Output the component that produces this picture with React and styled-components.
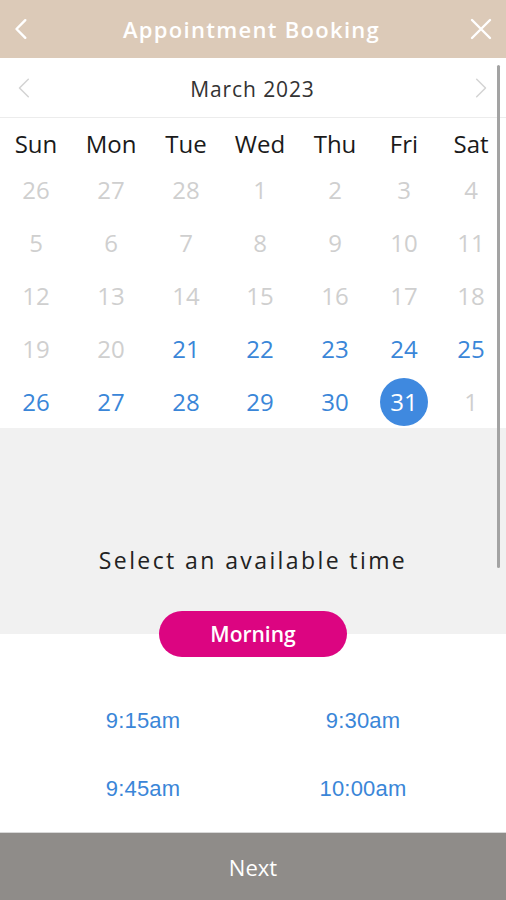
import React, { useState } from 'react'
import styled, { createGlobalStyle } from 'styled-components'

const GlobalStyle = createGlobalStyle`
  html, body {
    margin: 0;
    padding: 0;
    height: 100%;
  }
  body {
    font-family: 'Open Sans', sans-serif;
    background: #fff;
  }
  #root {
    height: 100%;
  }
`

const weekdays = ['Sun', 'Mon', 'Tue', 'Wed', 'Thu', 'Fri', 'Sat']

const weeks = [
  [26, 27, 28, 1, 2, 3, 4],
  [5, 6, 7, 8, 9, 10, 11],
  [12, 13, 14, 15, 16, 17, 18],
  [19, 20, 21, 22, 23, 24, 25],
  [26, 27, 28, 29, 30, 31, 1],
]

// first selectable cell is Tue 21 (week 3, col 2), last is Fri 31
const isAvailable = (w, d) => {
  if (w === 3) return d >= 2
  if (w === 4) return d <= 5
  return false
}

const slots = ['9:15am', '9:30am', '9:45am', '10:00am']

const Chevron = ({ dir = 'left', color, size = 20, width = 2 }) => (
  <svg width={size} height={size} viewBox='0 0 20 20' fill='none'>
    <path
      d={dir === 'left' ? 'M13 2 L5 10 L13 18' : 'M7 2 L15 10 L7 18'}
      stroke={color}
      strokeWidth={width}
      strokeLinecap='round'
      strokeLinejoin='round'
    />
  </svg>
)

const App = () => {
  const [selected, setSelected] = useState(31)

  return (
    <>
      <GlobalStyle />
      <Screen>
        <Header>
          <IconButton>
            <Chevron dir='left' color='#fff' size={22} width={2.2} />
          </IconButton>
          <Title>Appointment Booking</Title>
          <IconButton>
            <svg width='22' height='22' viewBox='0 0 22 22'>
              <path
                d='M2 2 L20 20 M20 2 L2 20'
                stroke='#fff'
                strokeWidth='2.4'
                strokeLinecap='round'
              />
            </svg>
          </IconButton>
        </Header>

        <Body>
          <Scrollbar />
          <MonthBar>
            <IconButton>
              <Chevron dir='left' color='#d4d4d4' size={22} width={1.4} />
            </IconButton>
            <MonthLabel>March 2023</MonthLabel>
            <IconButton>
              <Chevron dir='right' color='#d4d4d4' size={22} width={1.4} />
            </IconButton>
          </MonthBar>

          <Grid>
            {weekdays.map((d) => (
              <Weekday key={d}>{d}</Weekday>
            ))}
            {weeks.map((week, w) =>
              week.map((day, d) => {
                const available = isAvailable(w, d)
                const active = available && day === selected
                return (
                  <DayCell key={`${w}-${d}`}>
                    <Day
                      $available={available}
                      $active={active}
                      onClick={() => available && setSelected(day)}
                    >
                      {day}
                    </Day>
                  </DayCell>
                )
              })
            )}
          </Grid>

          <TimePanel>
            <Prompt>Select an available time</Prompt>
          </TimePanel>

          <PeriodPill>Morning</PeriodPill>

          <Slots>
            {slots.map((s) => (
              <Slot key={s}>{s}</Slot>
            ))}
          </Slots>
        </Body>

        <NextBar>Next</NextBar>
      </Screen>
    </>
  )
}

export default App

const Screen = styled.div`
  height: 900px;
  width: 506px;
  display: flex;
  flex-direction: column;
  overflow: hidden;
`

const Header = styled.div`
  height: 58px;
  flex-shrink: 0;
  background: #dccab8;
  display: flex;
  align-items: center;
  justify-content: space-between;
  padding: 0 12px 0 9px;
`

const IconButton = styled.div`
  width: 26px;
  height: 26px;
  display: flex;
  align-items: center;
  justify-content: center;
  cursor: pointer;
`

const Title = styled.div`
  color: #fff;
  font-family: 'Open Sans', sans-serif;
  font-weight: 600;
  font-size: 22px;
  letter-spacing: 1.3px;
`

const Body = styled.div`
  flex: 1;
  position: relative;
  display: flex;
  flex-direction: column;
`

const Scrollbar = styled.div`
  position: absolute;
  right: 6px;
  top: 7px;
  width: 3px;
  height: 503px;
  border-radius: 2px;
  background: #a3a3a3;
  z-index: 2;
`

const MonthBar = styled.div`
  height: 59px;
  flex-shrink: 0;
  border-bottom: 1px solid #ececec;
  display: flex;
  align-items: center;
  justify-content: space-between;
  padding: 0 13px 0 12px;
`

const MonthLabel = styled.div`
  font-size: 21px;
  color: #333;
  letter-spacing: 0.9px;
  padding-top: 2px;
`

const Grid = styled.div`
  display: grid;
  grid-template-columns: 72px 78px 72px 76px 74px 64px 70px;
  grid-auto-rows: 53px;
  grid-template-rows: 45px;
`

const Weekday = styled.div`
  display: flex;
  align-items: flex-end;
  justify-content: center;
  font-size: 24px;
  color: #1a1a1a;
  line-height: 1;
  padding-bottom: 7px;
`

const DayCell = styled.div`
  display: flex;
  align-items: center;
  justify-content: center;
`

const Day = styled.div`
  width: 48px;
  height: 48px;
  border-radius: 50%;
  display: flex;
  align-items: center;
  justify-content: center;
  font-size: 24px;
  color: ${(p) => (p.$active ? '#fff' : p.$available ? '#3a86d8' : '#cfcfcf')};
  background: ${(p) => (p.$active ? '#3f89df' : 'transparent')};
  cursor: ${(p) => (p.$available ? 'pointer' : 'default')};
`

const TimePanel = styled.div`
  background: #f1f1f1;
  height: 206px;
  flex-shrink: 0;
  display: flex;
  flex-direction: column;
  align-items: center;
  padding-top: 117px;
  box-sizing: border-box;
`

const Prompt = styled.div`
  font-size: 23px;
  letter-spacing: 2.4px;
  color: #222;
  line-height: 30px;
`

const PeriodPill = styled.div`
  align-self: center;
  margin-top: -23px;
  width: 188px;
  height: 46px;
  border-radius: 23px;
  background: #dc0581;
  color: #fff;
  font-size: 21px;
  font-weight: 600;
  display: flex;
  align-items: center;
  justify-content: center;
  position: relative;
`

const Slots = styled.div`
  flex: 1;
  display: grid;
  grid-template-columns: 220px 220px;
  grid-auto-rows: 68px;
  padding: 30px 33px 0;
`

const Slot = styled.div`
  display: flex;
  align-items: center;
  justify-content: center;
  font-family: 'Liberation Sans', Arial, sans-serif;
  font-size: 22px;
  letter-spacing: 0.2px;
  color: #3a86d8;
  cursor: pointer;
`

const NextBar = styled.div`
  height: 67px;
  flex-shrink: 0;
  border-top: 1px solid #d8d8d8;
  background: #8f8c89;
  color: #fff;
  font-size: 22px;
  display: flex;
  align-items: center;
  justify-content: center;
`
